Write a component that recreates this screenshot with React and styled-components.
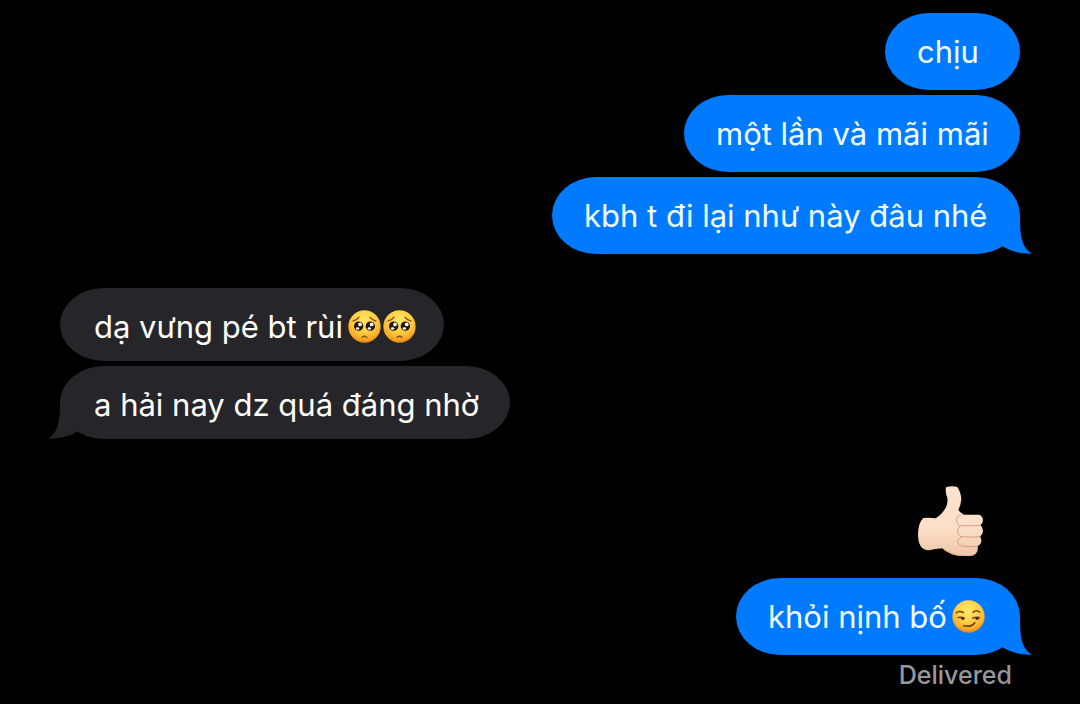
import React from "react";
import styled, { createGlobalStyle } from "styled-components";

const GlobalStyle = createGlobalStyle`
  body {
    margin: 0;
    background: #000;
    font-family: Inter, "Noto Sans", sans-serif;
  }
`;

const Conversation = styled.main`
  padding: 13px 60px 16px;
`;

const MessageList = styled.ol`
  display: flex;
  flex-direction: column;
  gap: 5px;
  margin: 0;
  padding: 0;
  list-style: none;
`;

const Message = styled.li`
  display: flex;
  justify-content: ${(p) => (p.$sent ? "flex-end" : "flex-start")};
  margin-top: ${(p) => p.$gap || 0}px;
`;

const Bubble = styled.p`
  position: relative;
  box-sizing: border-box;
  display: flex;
  align-items: center;
  gap: 5px;
  min-width: ${(p) => p.$width}px;
  height: ${(p) => (p.$sent ? 77 : 73)}px;
  margin: 0;
  padding: ${(p) => (p.$sent ? "0 24px 0 32px" : "4px 24px 0 34px")};
  border-radius: 44px / 50%;
  background: ${(p) => (p.$sent ? "#007aff" : "#26252a")};
  color: ${(p) => (p.$sent ? "#f0fdff" : "#fff")};
  font-size: 31px;
  line-height: 40px;
  white-space: nowrap;
`;

const Tail = styled.svg`
  position: absolute;
  bottom: 0;
  width: 42px;
  height: 39px;
  fill: ${(p) => (p.$sent ? "#007aff" : "#26252a")};
  ${(p) => (p.$sent ? "right: -12px;" : "left: -12px; transform: scaleX(-1);")}
`;

const EmojiGroup = styled.span`
  display: flex;
  gap: 2px;
`;

const Face = styled.svg`
  display: block;
  width: 33px;
  height: 33px;
`;

const Thumb = styled.svg`
  display: block;
  width: 66px;
  height: 72px;
  margin-right: 36px;
`;

const Status = styled.p`
  margin: 4px 8px 0;
  color: #98989c;
  font-size: 25px;
  font-weight: 500;
  line-height: 32px;
  text-align: right;
`;

function BubbleTail({ sent }) {
  return (
    <Tail $sent={sent} viewBox="0 0 42 39" aria-hidden="true">
      <path d="M30 0C30 15 30 32 42 38.6C30 39 20 36 12 31L4 18Z" />
    </Tail>
  );
}

function FaceShades({ id }) {
  return (
    <defs>
      <radialGradient id={id} cx="50%" cy="32%" r="70%">
        <stop offset="0" stopColor="#ffe86a" />
        <stop offset="0.5" stopColor="#fed046" />
        <stop offset="0.82" stopColor="#f9a926" />
        <stop offset="1" stopColor="#e07d12" />
      </radialGradient>
    </defs>
  );
}

function PleadingFace({ id }) {
  return (
    <Face viewBox="0 0 96 96" role="img" aria-label="pleading face">
      <FaceShades id={id} />
      <circle cx="48" cy="48" r="47" fill={`url(#${id})`} />
      <g fill="none" stroke="#8d4b0c" strokeWidth="4" strokeLinecap="round">
        <path d="M15 32Q26 30 32 21" />
        <path d="M81 32Q70 30 64 21" />
        <path d="M41 80Q48 73 55 80" />
      </g>
      <circle cx="31" cy="47" r="13.5" fill="#2b1408" />
      <circle cx="65" cy="47" r="13.5" fill="#2b1408" />
      <g fill="#fff">
        <circle cx="35" cy="42" r="5.5" />
        <circle cx="69" cy="42" r="5.5" />
        <ellipse cx="28" cy="54" rx="5" ry="3.5" />
        <ellipse cx="62" cy="54" rx="5" ry="3.5" />
      </g>
    </Face>
  );
}

function SmirkingFace({ id }) {
  return (
    <Face viewBox="0 0 96 96" role="img" aria-label="smirking face">
      <FaceShades id={id} />
      <circle cx="48" cy="48" r="47" fill={`url(#${id})`} />
      <g fill="none" stroke="#70400e" strokeLinecap="round">
        <path d="M12 38Q21 29 34 37" strokeWidth="4" />
        <path d="M61 36Q72 27 81 36" strokeWidth="4" />
        <path d="M18 51Q28 49 36 53" strokeWidth="4" />
        <path d="M60 53Q70 49 80 51" strokeWidth="4" />
        <path d="M34 75Q57 80 66 66" strokeWidth="5" />
      </g>
      <ellipse cx="31" cy="54" rx="5" ry="4" fill="#4b270b" />
      <ellipse cx="73" cy="54" rx="5" ry="4" fill="#4b270b" />
    </Face>
  );
}

function ThumbsUp() {
  return (
    <Thumb viewBox="54 32 198 216" role="img" aria-label="thumbs up">
      <defs>
        <linearGradient id="skin" x1="0" y1="0" x2="0" y2="1">
          <stop offset="0" stopColor="#fbe3ce" />
          <stop offset="0.6" stopColor="#fbdfc9" />
          <stop offset="1" stopColor="#efc5a7" />
        </linearGradient>
      </defs>
      <path
        fill="url(#skin)"
        d="M138 36Q155 30 172 35Q182 49 184 70Q183 88 175 104Q179 112 192 118L238 118Q249 123 249 134Q249 144 241 150Q250 156 249 168Q248 179 240 184Q245 190 244 199Q243 208 233 213Q235 224 229 233Q222 242 207 242L174 241Q148 238 127 219Q106 220 87 225Q71 225 62 213Q55 201 54 180Q54 143 70 128Q90 126 107 129Q127 116 138 96Q144 83 142 68Q135 50 138 36Z"
      />
      <g fill="none" stroke="#d8a383" strokeWidth="3" strokeLinecap="round">
        <path d="M183 118Q170 121 169 134Q169 146 181 152Q171 160 173 171Q174 180 184 185Q173 190 173 199Q174 209 184 212" />
        <path d="M181 151Q212 153 242 150" />
        <path d="M184 184Q214 187 240 184" />
        <path d="M184 212Q210 216 233 213" />
      </g>
      <path
        d="M131 222Q154 238 176 240L207 241Q222 240 228 233"
        fill="none"
        stroke="#e0ae8b"
        strokeWidth="3"
      />
    </Thumb>
  );
}

export default function App() {
  return (
    <Conversation>
      <GlobalStyle />
      <MessageList>
        <Message $sent>
          <Bubble $sent $width={135}>chịu</Bubble>
        </Message>
        <Message $sent>
          <Bubble $sent $width={336}>một lần và mãi mãi</Bubble>
        </Message>
        <Message $sent>
          <Bubble $sent $width={468}>
            kbh t đi lại như này đâu nhé
            <BubbleTail sent />
          </Bubble>
        </Message>
        <Message $gap={29}>
          <Bubble $width={384}>
            dạ vưng pé bt rùi
            <EmojiGroup>
              <PleadingFace id="pleading-one" />
              <PleadingFace id="pleading-two" />
            </EmojiGroup>
          </Bubble>
        </Message>
        <Message>
          <Bubble $width={450}>
            a hải nay dz quá đáng nhờ
            <BubbleTail />
          </Bubble>
        </Message>
        <Message $sent $gap={42}>
          <ThumbsUp />
        </Message>
        <Message $sent $gap={15}>
          <Bubble $sent $width={284}>
            khỏi nịnh bố
            <SmirkingFace id="smirking" />
            <BubbleTail sent />
          </Bubble>
        </Message>
      </MessageList>
      <Status>Delivered</Status>
    </Conversation>
  );
}
